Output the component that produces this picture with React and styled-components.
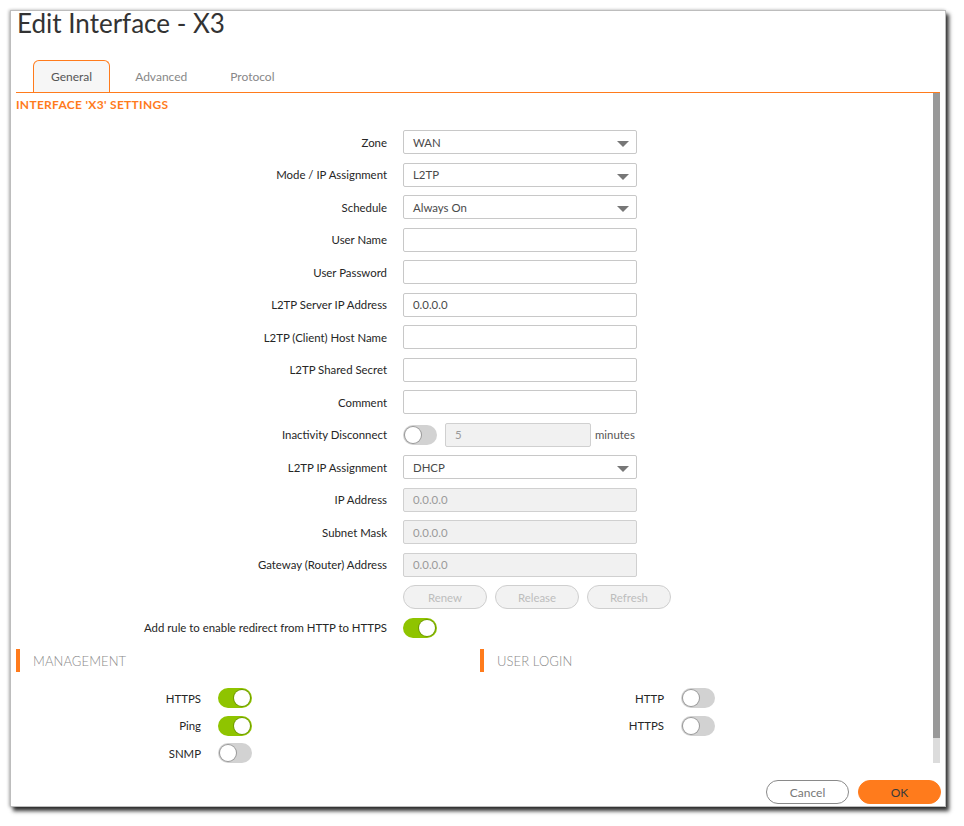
import styled, { createGlobalStyle } from 'styled-components';

const Global = createGlobalStyle`
  html, body {
    margin: 0;
    padding: 0;
    background: #fff;
    font-family: Lato, "Open Sans", Arial, sans-serif;
  }
  body { padding: 10px 0 20px 10px; }
  * { box-sizing: border-box; }
`;

const Dialog = styled.div`
  width: 936px;
  height: 797px;
  background: #fff;
  border: 1px solid #bdbdbd;
  box-shadow: 3px 4px 4px rgba(0, 0, 0, 0.8), -1px 0 3px rgba(0, 0, 0, 0.3);
  display: flex;
  flex-direction: column;
`;

const Title = styled.h1`
  margin: 0;
  padding-left: 6px;
  font-size: 26px;
  line-height: 24px;
  font-weight: 400;
  color: #333;
`;

const TabBar = styled.div`
  margin: 25px 5px 0 5px;
  height: 32px;
  display: flex;
  align-items: flex-end;
  gap: 7px;
  padding-left: 17px;
`;

const Tab = styled.div`
  height: 32px;
  padding: 0 17px;
  display: flex;
  align-items: center;
  font-size: 12px;
  color: ${p => (p.$active ? '#555' : '#888')};
  background: ${p => (p.$active ? '#f6f6f6' : 'transparent')};
  border: 1px solid ${p => (p.$active ? '#ff7b1c' : 'transparent')};
  border-bottom: none;
  border-radius: 6px 6px 0 0;
`;

const Body = styled.div`
  margin: 0 5px;
  height: 671px;
  border-top: 1px solid #ff7b1c;
  display: flex;
`;

const Content = styled.div`
  flex: 1;
  overflow: hidden;
`;

const Track = styled.div`
  width: 7px;
  background: #dcdcdc;
  display: flex;
  flex-direction: column;
`;

const Thumb = styled.div`
  height: 645px;
  background: #999;
`;

const SectionTitle = styled.div`
  margin-top: 5px;
  font-size: 12px;
  line-height: 13px;
  font-weight: 700;
  letter-spacing: 0.3px;
  color: #ff7b1c;
`;

const Form = styled.div`
  margin-top: 19px;
  display: grid;
  grid-template-columns: 371px auto;
  column-gap: 16px;
  row-gap: 8.5px;
  align-items: center;
`;

const Label = styled.div`
  text-align: right;
  font-size: 11.4px;
  color: #262626;
  white-space: nowrap;
`;

const Field = styled.div`
  display: flex;
  align-items: center;
  gap: 8px;
  height: ${p => p.$h || 24}px;
`;

const Input = styled.div`
  width: ${p => p.$w || 234}px;
  height: 24px;
  border: 1px solid ${p => (p.$disabled ? '#d0d0d0' : '#c8c8c8')};
  border-radius: 2px;
  background: ${p => (p.$disabled ? '#f1f1f1' : '#fff')};
  color: ${p => (p.$disabled ? '#9a9a9a' : '#4a4a4a')};
  font-size: 11.4px;
  padding-left: 9px;
  display: flex;
  align-items: center;
`;

const Select = styled(Input)`
  position: relative;
  &::after {
    content: '';
    position: absolute;
    right: 7px;
    top: 10px;
    border-left: 6px solid transparent;
    border-right: 6px solid transparent;
    border-top: 6px solid #777;
  }
`;

const Unit = styled.span`
  font-size: 11.4px;
  color: #555;
  margin-left: -4px;
`;

const Pill = styled.div`
  width: 84px;
  height: 24px;
  border: 1px solid #cfcfcf;
  border-radius: 12px;
  background: #f2f2f2;
  color: #bdbdbd;
  font-size: 11.4px;
  display: flex;
  align-items: center;
  justify-content: center;
`;

const Toggle = styled.div`
  position: relative;
  width: 34px;
  height: 20px;
  border-radius: 10px;
  background: ${p => (p.$on ? '#8fc400' : '#d2d2d2')};
  flex-shrink: 0;
  &::after {
    content: '';
    position: absolute;
    top: 2px;
    left: ${p => (p.$on ? '16px' : '2px')};
    width: 16px;
    height: 16px;
    border-radius: 50%;
    background: #fff;
    box-shadow: 0 0 0 1px ${p => (p.$on ? '#6f9a00' : '#9a9a9a')};
  }
`;

const Columns = styled.div`
  margin-top: 11.5px;
  display: grid;
  grid-template-columns: 464px auto;
`;

const Group = styled.div`
  display: flex;
  flex-direction: column;
`;

const GroupTitle = styled.div`
  height: 23px;
  border-left: 4px solid #ff7b1c;
  padding-left: 13px;
  display: flex;
  align-items: center;
  font-size: 13px;
  font-weight: 300;
  color: #8a8a8a;
  letter-spacing: 0.1px;
`;

const ToggleList = styled.div`
  margin-top: 16px;
  display: grid;
  grid-template-columns: ${p => p.$w || 185}px auto;
  column-gap: 17px;
  row-gap: 7.5px;
  align-items: center;
`;

const Footer = styled.div`
  flex: 1;
  display: flex;
  justify-content: flex-end;
  align-items: flex-start;
  gap: 9px;
  padding: 17px 4px 0 0;
`;

const Btn = styled.button`
  width: 83px;
  height: 24px;
  border-radius: 12px;
  font-family: inherit;
  font-size: 12px;
  cursor: pointer;
  border: 1px solid ${p => (p.$primary ? '#ff7b1c' : '#8a8a8a')};
  background: ${p => (p.$primary ? '#ff7b1c' : '#fff')};
  color: ${p => (p.$primary ? '#3a3a3a' : '#777')};
`;

const rows = [
  ['Zone', 'select', 'WAN'],
  ['Mode / IP Assignment', 'select', 'L2TP'],
  ['Schedule', 'select', 'Always On'],
  ['User Name', 'input', ''],
  ['User Password', 'input', ''],
  ['L2TP Server IP Address', 'input', '0.0.0.0'],
  ['L2TP (Client) Host Name', 'input', ''],
  ['L2TP Shared Secret', 'input', ''],
  ['Comment', 'input', ''],
];

const rows2 = [
  ['IP Address', '0.0.0.0'],
  ['Subnet Mask', '0.0.0.0'],
  ['Gateway (Router) Address', '0.0.0.0'],
];

export default function App() {
  return (
    <>
      <Global />
      <Dialog>
        <Title>Edit Interface - X3</Title>
        <TabBar>
          <Tab $active>General</Tab>
          <Tab>Advanced</Tab>
          <Tab>Protocol</Tab>
        </TabBar>
        <Body>
          <Content>
            <SectionTitle>INTERFACE 'X3' SETTINGS</SectionTitle>
            <Form>
              {rows.map(([label, kind, value]) => [
                <Label key={label + '-l'}>{label}</Label>,
                <Field key={label + '-f'}>
                  {kind === 'select' ? <Select>{value}</Select> : <Input>{value}</Input>}
                </Field>,
              ])}
              <Label>Inactivity Disconnect</Label>
              <Field>
                <Toggle />
                <Input $disabled $w={146}>5</Input>
                <Unit>minutes</Unit>
              </Field>
              <Label>L2TP IP Assignment</Label>
              <Field>
                <Select>DHCP</Select>
              </Field>
              {rows2.map(([label, value]) => [
                <Label key={label + '-l'}>{label}</Label>,
                <Field key={label + '-f'}>
                  <Input $disabled>{value}</Input>
                </Field>,
              ])}
              <span />
              <Field>
                <Pill>Renew</Pill>
                <Pill>Release</Pill>
                <Pill>Refresh</Pill>
              </Field>
              <Label>Add rule to enable redirect from HTTP to HTTPS</Label>
              <Field $h={20}>
                <Toggle $on />
              </Field>
            </Form>
            <Columns>
              <Group>
                <GroupTitle>MANAGEMENT</GroupTitle>
                <ToggleList>
                  <Label>HTTPS</Label>
                  <Toggle $on />
                  <Label>Ping</Label>
                  <Toggle $on />
                  <Label>SNMP</Label>
                  <Toggle />
                </ToggleList>
              </Group>
              <Group>
                <GroupTitle>USER LOGIN</GroupTitle>
                <ToggleList $w={184}>
                  <Label>HTTP</Label>
                  <Toggle />
                  <Label>HTTPS</Label>
                  <Toggle />
                </ToggleList>
              </Group>
            </Columns>
          </Content>
          <Track>
            <Thumb />
          </Track>
        </Body>
        <Footer>
          <Btn>Cancel</Btn>
          <Btn $primary>OK</Btn>
        </Footer>
      </Dialog>
    </>
  );
}
